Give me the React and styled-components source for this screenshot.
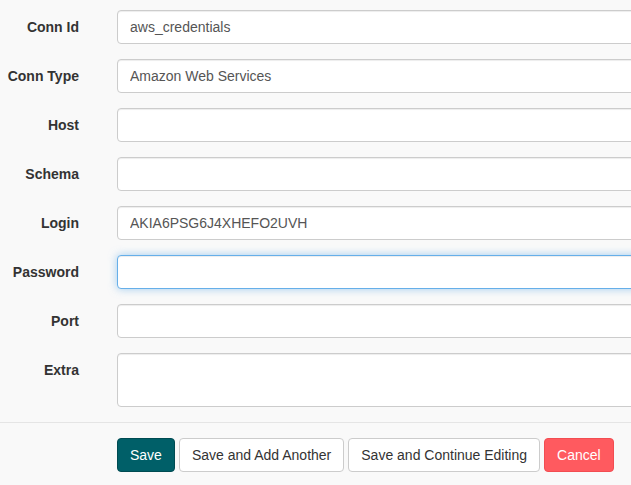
import React from 'react';
import styled, { createGlobalStyle } from 'styled-components';

const Global = createGlobalStyle`
  html, body {
    margin: 0;
    padding: 0;
    background: #f9f9f9;
  }
  body {
    font-family: "Liberation Sans", Arial, sans-serif;
    font-size: 14px;
    color: #333;
  }
`;

// the form is wider than the window: the inputs run past the right edge
const Page = styled.div`
  width: 100vw;
  height: 100vh;
  overflow: hidden;
`;

const Form = styled.form`
  width: 900px;
  padding-top: 10px;
`;

const Row = styled.div`
  display: grid;
  grid-template-columns: 79px 1fr;
  column-gap: 38px;
  margin-bottom: 15px;
`;

const Label = styled.label`
  padding-top: 7px;
  line-height: 20px;
  text-align: right;
  font-weight: 700;
  white-space: nowrap;
`;

const Input = styled.input`
  box-sizing: border-box;
  display: block;
  width: 100%;
  height: 34px;
  padding: 6px 12px;
  font-family: inherit;
  font-size: 14px;
  line-height: 20px;
  color: #555;
  background: #fff;
  border: 1px solid ${p => (p.$focus ? '#66afe9' : '#ccc')};
  border-radius: 4px;
  box-shadow: ${p =>
    p.$focus
      ? 'inset 0 1px 1px rgba(0,0,0,.075), 0 0 8px rgba(102,175,233,.6)'
      : 'inset 0 1px 1px rgba(0,0,0,.075)'};
  outline: 0;
`;

const Area = styled.textarea`
  box-sizing: border-box;
  display: block;
  width: 100%;
  height: 54px;
  padding: 6px 12px;
  font-family: inherit;
  font-size: 14px;
  color: #555;
  background: #fff;
  border: 1px solid #ccc;
  border-radius: 4px;
  box-shadow: inset 0 1px 1px rgba(0,0,0,.075);
  resize: none;
  outline: 0;
`;

const Actions = styled.div`
  border-top: 1px solid #e5e5e5;
  padding: 15px 0 0 117px;
  display: flex;
  gap: 4px;
`;

const colors = {
  primary: { bg: '#005f68', border: '#004b52', fg: '#fff' },
  default: { bg: '#fff', border: '#ccc', fg: '#333' },
  danger: { bg: '#ff5a5f', border: '#f24d52', fg: '#fff' },
};

const Button = styled.button`
  box-sizing: border-box;
  height: 34px;
  padding: 6px 12px;
  font-family: inherit;
  font-size: 14px;
  line-height: 20px;
  border-radius: 4px;
  border: 1px solid ${p => colors[p.$kind].border};
  background: ${p => colors[p.$kind].bg};
  color: ${p => colors[p.$kind].fg};
  cursor: pointer;
`;

const fields = [
  ['Conn Id', 'aws_credentials'],
  ['Conn Type', 'Amazon Web Services'],
  ['Host', ''],
  ['Schema', ''],
  ['Login', 'AKIA6PSG6J4XHEFO2UVH'],
  ['Password', '', true],
  ['Port', ''],
];

export default function App() {
  return (
    <Page>
      <Global />
      <Form onSubmit={e => e.preventDefault()}>
        {fields.map(([label, value, focus]) => (
          <Row key={label}>
            <Label>{label}</Label>
            <Input defaultValue={value} $focus={focus} readOnly />
          </Row>
        ))}
        <Row>
          <Label>Extra</Label>
          <Area readOnly />
        </Row>
        <Actions>
          <Button $kind="primary">Save</Button>
          <Button $kind="default">Save and Add Another</Button>
          <Button $kind="default">Save and Continue Editing</Button>
          <Button $kind="danger">Cancel</Button>
        </Actions>
      </Form>
    </Page>
  );
}
